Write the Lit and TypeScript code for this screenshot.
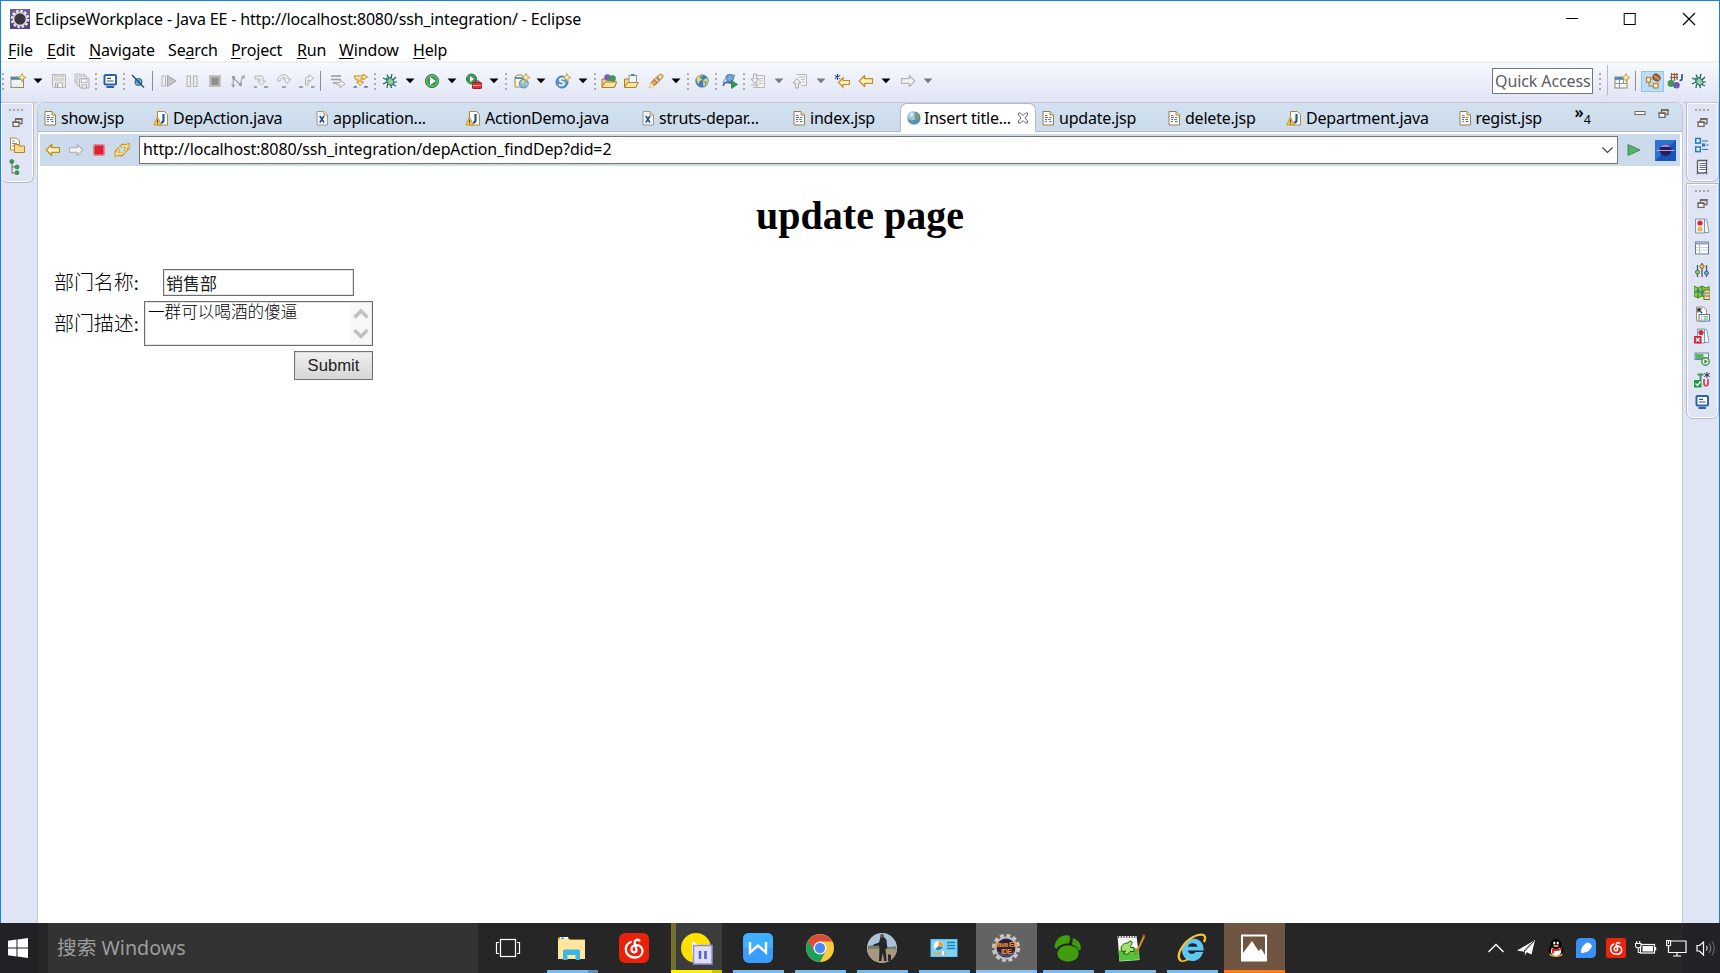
import { LitElement, html, svg, css, nothing, type TemplateResult } from "lit";
import { customElement } from "lit/decorators.js";

type Cell = [x: number, icon: string];

/* ---------- glyph library, 16x16 unless a viewBox is given ---------- */
const caret = (c: string) => svg`<path d="M3.500 5.500h9l-4.500 4.700z" fill="${c}"/>`;
const jspPage = svg`<path d="M3 1.500h7l3.500 3.500v10H3z" fill="#fbfdff" stroke="#94814e"/><path d="M10 1.500V5h3.500" fill="#e9d9a8" stroke="#a58544"/><path d="M5 5.500h2.500M9 7.500h2.500M5 11.500h2" stroke="#d85a6a"/><path d="M5 7.500h3M5 9.500h2M9 11.500h2.500" stroke="#4a6ab0"/><path d="M8 9.500h3" stroke="#3f9f6a"/>`;
const bug = svg`<g stroke="#1f5f5a" stroke-width="1.200" fill="none"><path d="M1 5l3 1.500M5 1.500l1.500 3M10 1l-1 4M14 4l-3 3M15 9h-4M14 13l-4-2M9.500 15l-1-3M5 15l.500-4M1 11l4-2"/></g><ellipse cx="8" cy="8.500" rx="3" ry="4" transform="rotate(-40 8 8)" fill="#8fcf9a" stroke="#1f6b62"/><circle cx="5.300" cy="6" r="1.800" fill="#3b8a83"/>`;
const globe = svg`<circle cx="8" cy="8" r="6.300" fill="#3f7fc0" stroke="#5a7fa5" stroke-width=".6"/><path d="M3 4.500C5 2 7 1.800 8.500 2.200L7 5 8 7 5.500 8 5 11C3 9.500 2 7 3 4.500zM9.500 7l3-2 1.500 2.500c0 3-2 5-4.500 6L9 10z" fill="#e8d67a"/><path d="M6 2.500l3 .5-1 2-2.500.500zM10.500 8l2.500.5-2 3.500z" fill="#58a05a"/>`;
const globeSoft = svg`<circle cx="8" cy="8" r="6.600" fill="#4a8ec2"/><circle cx="6" cy="6" r="4.500" fill="#9cc9e2"/><path d="M9 2.500l3 1.500 1.500 3.500-2 3.500L9.500 9 8.500 6zM4 9l2.500 1 .5 3.500-2.500-1.500z" fill="#8a9a5c"/><circle cx="5.500" cy="4.500" r="2" fill="#d5ebf5"/>`;
const back = (s: string, f: string) => svg`<path d="M1.200 8l5.500-5.500v3.200h7.800v4.600H6.700v3.200z" fill="${f}" stroke="${s}" stroke-width="1.200" stroke-linejoin="round"/>`;
const fwd = (s: string, f: string) => svg`<path d="M14.800 8L9.300 2.500v3.200H1.500v4.600h7.800v3.200z" fill="${f}" stroke="${s}" stroke-width="1.200" stroke-linejoin="round"/>`;
const console_ = svg`<rect x="2.500" y="2" width="11.500" height="9.500" rx="1" fill="#fff" stroke="#2d62a8" stroke-width="2"/><path d="M5 5.300h4M5 8h6.500" stroke="#2b5797" stroke-width="1.200"/><path d="M4.500 14h7.500" stroke="#2d62a8" stroke-width="2"/>`;
const restore = svg`<path d="M6.500 4h6.500v4.500h-2.500M6.500 4v2.500" fill="none" stroke="#70685c" stroke-width="1.300"/><rect x="4.100" y="7" width="5.900" height="4.400" fill="#fff" stroke="#70685c" stroke-width="1.300"/><path d="M6 3.900h7.500M3.500 7.200h7" stroke="#70685c" stroke-width="1.600"/>`;
const spark = svg`<path d="M12 .5l1.200 2.800 2.800 1.200-2.800 1.200L12 8.500l-1.200-2.800L8 4.500l2.800-1.200z" fill="#fdf3c0" stroke="#c89a2b" stroke-width=".9"/>`;
const xmlPage = svg`<path d="M3 1.500h7l3.500 3.500v10H3z" fill="#eef4fb" stroke="#a09a80"/><path d="M10 1.500V5h3.500" fill="#e9d9a8" stroke="#b89a54"/><path d="M5.800 6l4.200 6.500M10 6l-4.200 6.500" stroke="#24477f" stroke-width="1.500"/>`;
const javaPage = svg`<path d="M4.500 1.500h7l3 3v10.500h-10z" fill="#fff" stroke="#b08b3c"/><path d="M10.500 4v6.500c0 1.500-1 2-2.500 2" fill="none" stroke="#1f5a97" stroke-width="2.200"/><path d="M4.500 7L.8 15h7.400z" fill="#f7d067" stroke="#c78a1b" stroke-width=".9"/><path d="M4.500 9.500v3M4.500 13.300v1" stroke="#6a4206" stroke-width="1.200"/>`;

const glyphs: Record<string, TemplateResult<2>> = {
  caret: caret("#000"),
  caretOff: caret("#77787c"),
  newWiz: svg`<rect x="1" y="4" width="12.500" height="10.500" fill="#eef5fb" stroke="#a58a50"/><path d="M1 5.500h10" stroke="#3f80bb" stroke-width="2.500"/><path d="M3 14C9 13 12 11 12.500 8" stroke="#cfe0ee" fill="none"/>${spark}`,
  save: svg`<path d="M1.500 1.500h13v13h-12l-1-1z" fill="#e9eaee" stroke="#b3b4b8"/><rect x="4" y="2" width="8" height="5" fill="#f8f8fa" stroke="#bcbdc0"/><path d="M5 3.500h6M5 5.500h6" stroke="#c8c9cc"/><rect x="4.500" y="10" width="7" height="4.500" fill="#f8f8fa" stroke="#b3b4b8"/><path d="M6.500 11v3" stroke="#a5a6aa" stroke-width="1.500"/>`,
  saveAll: svg`<path d="M1 1h9.500v9H1z" fill="#ebecf0" stroke="#bbbcc0"/><path d="M3 3h9.500v9.500H3z" fill="#ebecf0" stroke="#b7b8bc"/><path d="M5.500 5.500h9.500v9.500H6.500l-1-1z" fill="#e9eaee" stroke="#b0b1b5"/><rect x="7.500" y="6" width="5.500" height="3.500" fill="#fafafc" stroke="#bcbdc0"/><rect x="8" y="12" width="4.500" height="3" fill="#fafafc" stroke="#b0b1b5"/>`,
  console: console_,
  skip: svg`<circle cx="8.500" cy="9" r="3.600" fill="#6aa6cf" stroke="#2a6496"/><path d="M2 2l12 12.500" stroke="#1e3f66" stroke-width="1.200"/>`,
  resume: svg`<rect x="1" y="3" width="3.500" height="10" fill="#eef0f0" stroke="#b5b7b7"/><path d="M6.500 2.500L15 8l-8.500 5.500z" fill="#c2c5c5" stroke="#a2a5a5"/>`,
  suspend: svg`<rect x="3" y="3" width="3.500" height="10.500" fill="#eceded" stroke="#b2b4b4"/><rect x="9.500" y="3" width="3.500" height="10.500" fill="#eceded" stroke="#b2b4b4"/>`,
  stopOff: svg`<rect x="2.500" y="2.500" width="11" height="11" fill="#b8b9bb" stroke="#c2c3c6"/><rect x="4.500" y="4.500" width="7" height="7.500" fill="#8d8e90"/>`,
  disconnect: svg`<path d="M3.200 13V5l7 6.500 2.500-8" fill="none" stroke="#9b9da0" stroke-width="1.100"/><path d="M10.500 4.500l4-3 .5 4zM1 11l4.500 1-2.500 3z" fill="#a5a7aa"/><circle cx="3.500" cy="4.500" r="1.700" fill="#9a9c9f"/><circle cx="10.500" cy="11.500" r="1.700" fill="#9a9c9f"/>`,
  stepIn: svg`<path d="M2 3h6.500c1 0 1.500.5 1.500 1.500V8h2.500L8.500 12 4.500 8H7V6H2z" fill="#eef0f2" stroke="#b2b4b7"/><path d="M1 14h3M11 14h4" stroke="#a2a4a8" stroke-width="1.800"/>`,
  stepOver: svg`<path d="M1.500 8C2 0 12 0 12.500 6H15l-3.800 4.500L7.500 6H10C9 3.500 5 4 4 8z" fill="#eef0f2" stroke="#b2b4b7"/><path d="M6 14h4" stroke="#a2a4a8" stroke-width="1.800"/>`,
  stepRet: svg`<path d="M6.500 12V5.500c0-1 .5-1.500 1.500-1.500h2V1.500l4.500 3.800L10 9V7H9v5z" fill="#eef0f2" stroke="#b2b4b7"/><path d="M0 14h4M12 14h3.500" stroke="#a2a4a8" stroke-width="1.800"/>`,
  dropFrame: svg`<path d="M1 3h10M1 6.500h10M3 10h6" stroke="#97999c" stroke-width="1.700"/><path d="M10 6.500v3H7v2.500h3V15l5-4.200z" fill="#eceef0" stroke="#abadb0"/>`,
  filters: svg`<path d="M1 3h9V1l4.500 3L10 7V5H8v4h2.500L7 12.500 3.500 9H6V7H3z" fill="#fbe6a4" stroke="#c08d24"/><path d="M0 14.500c2-2 3-2 4.500 0zM10.500 14.500c2-2 3-2 5 0z" fill="#28559a"/>`,
  bug,
  run: svg`<circle cx="8" cy="8" r="6.600" fill="#3f9a52" stroke="#2c7f3f"/><circle cx="8" cy="8" r="5.500" fill="none" stroke="#8fcf8f" stroke-width=".8"/><path d="M6 3.800L11.500 8 6 12.200z" fill="#fff"/>`,
  extTools: svg`<circle cx="5.500" cy="6" r="5" fill="#3f9a52" stroke="#2c7f3f"/><path d="M4 3l4 3-4 3z" fill="#fff"/><path d="M9 9.500V8h4v1.500" fill="none" stroke="#8c1c1c"/><rect x="6.500" y="9.500" width="9" height="6" rx=".8" fill="#d5323a" stroke="#a01820"/><path d="M6.500 12.500h9" stroke="#f3a0a0"/>`,
  newWeb: svg`<path d="M1 4l2-2h5l1 2v10H1z" fill="#fdf6dc" stroke="#a58a50"/><path d="M1 5h8" stroke="#4f86bb" stroke-width="1.800"/><circle cx="9.800" cy="10.500" r="4.500" fill="#8ab8da" stroke="#4a7da8" stroke-width=".8"/><path d="M7.500 8l2.500-1 .5 2.500-2 2zM11.500 10l2 0-1 3.500z" fill="#dcd88e"/>${spark}`,
  newServlet: svg`<circle cx="7" cy="9" r="6" fill="#5b97cf" stroke="#3f77b0"/><path d="M9.500 6.300C8 4.800 4.500 5.300 4.800 7.300s4.500 1.300 4.500 3.200S5.500 13.200 4 11.500" fill="none" stroke="#fff" stroke-width="1.700"/>${spark}`,
  openType: svg`<path d="M1 6h5l1 1.500h7V14H1z" fill="#f8d680" stroke="#a97f2c"/><circle cx="6.500" cy="4.500" r="3.300" fill="#7461b5"/><circle cx="11.500" cy="5.500" r="3.300" fill="#3f9a52"/><path d="M1 14.500L4 9h12l-3 5.500z" fill="#fbe4a3" stroke="#b08328"/>`,
  openTask: svg`<path d="M1.500 6h5l1 1.500h6V14h-12z" fill="#f8d680" stroke="#a97f2c"/><rect x="6" y="2.500" width="7.500" height="9" fill="#f2f5fa" stroke="#8e98a8"/><path d="M8 2h3.500" stroke="#6d7683" stroke-width="2"/><path d="M1.500 14.500l3-5h11l-3 5z" fill="#fbe4a3" stroke="#b08328"/>`,
  search: svg`<path d="M11.500 1.500c2-1 4 .5 3.500 2.500L9.500 10 6 6.500z" fill="#f6d384" stroke="#b0803a"/><path d="M8.800 4.500l3 3" stroke="#8d86a5" stroke-width="1.800"/><path d="M6 6.500L9.500 10l-3.500 2.500-2.800-2.800z" fill="#e7a05a" stroke="#a8682c"/><path d="M3 9.500l3.200 3.200L.8 15.200z" fill="#fbe9b2" stroke="#d8b060" stroke-width=".6"/>`,
  globe,
  launchWs: svg`<path d="M5 2h8l-4 8H1z" fill="#d9e6f2" stroke="#7b97b5"/><circle cx="8" cy="5" r="3.600" fill="#7aa7d0" stroke="#4f7eae"/><path d="M1 13c2-5 5-5 9-2" fill="none" stroke="#3c6da0" stroke-width="1.500"/><path d="M9.500 7.500l6 4-6 4z" fill="#2e9a4a" stroke="#1f7a36" stroke-width=".7"/>`,
  nextAnn: svg`<path d="M6.500 2.500h8v12h-8z" fill="#f2f3f5" stroke="#b6b8bb"/><path d="M9 5.500h4M9 8h4M9 10.500h4" stroke="#c0c1c4"/><path d="M3.500 1h3v5h2.500L5 10.500 1 6h2.500z" fill="#eceef0" stroke="#a9abae"/><path d="M1 12h8M3 14.500h4" stroke="#b6b8bb"/>`,
  prevAnn: svg`<path d="M4.500 1.500h10v11h-5" fill="#f2f3f5" stroke="#b6b8bb"/><path d="M7 4h6M9 6.500h4M10 9h3" stroke="#c0c1c4"/><path d="M3.500 15h3v-5h2.500L5 5.500 1 10h2.500z" fill="#eceef0" stroke="#a9abae"/>`,
  lastEdit: svg`<path d="M4.500 9.500l4.500-4.500v2.500h6.500v4H9v2.500z" fill="#fdeebc" stroke="#c08d24" stroke-width="1.200"/><path d="M3.500 1v6M.8 2.400l5.400 3.200M6.200 2.400L.8 5.600" stroke="#24477f" stroke-width="1.100"/>`,
  back: back("#c08d24", "#fdf0c0"),
  fwdOff: fwd("#b4b6ba", "#f3f4f6"),
  openPersp: svg`<rect x="1" y="4" width="12" height="11" fill="#f5f9fd" stroke="#8f8a60"/><path d="M1 5.500h9" stroke="#3f80bb" stroke-width="2.500"/><path d="M5.500 7v8M1 10.500h12M9.500 7v4" stroke="#8f9a80"/>${spark}`,
  javaEE: svg`<path d="M4 8v5h6M4 6h5" fill="none" stroke="#9a8a50" stroke-width="1.200"/><rect x="1.500" y="4.500" width="4" height="4.500" fill="#fff6c8" stroke="#b8872c" stroke-width="1.300"/><rect x="8.500" y="10.500" width="4.500" height="4.500" fill="#fff6c8" stroke="#b8872c" stroke-width="1.300"/><ellipse cx="11.500" cy="4.500" rx="4" ry="3.300" transform="rotate(40 11.500 4.500)" fill="#a8643a" stroke="#6c3a1c" stroke-width=".8"/><path d="M8.800 2.600l5.500 4" stroke="#f0c898" stroke-width=".9"/>`,
  java: svg`<path d="M4 1.500h7M3 4.500h8M4.500 0v8M7.500 0v8M10 0v7" stroke="#8c5a3a" stroke-width="1.200"/><path d="M15 1v4.500c0 1.500-1 2-2.500 2" fill="none" stroke="#24579a" stroke-width="1.700"/><circle cx="4" cy="10.500" r="3.400" fill="#3f9a52"/><circle cx="9.500" cy="12.300" r="3.300" fill="#6d5bb0"/>`,
  stop: svg`<rect x="2.500" y="2.500" width="11" height="11" rx="1" fill="#f2a3a3" stroke="#e08a8c"/><rect x="4" y="4" width="8" height="8" fill="#e01f33" stroke="#cf1c30"/>`,
  refresh: svg`<g fill="none" stroke="#c08d24" stroke-width="3.400"><path d="M6.500 5.500C8 2.500 11 2.500 12.300 5c.6 1.500.2 3-1.300 4.500"/><path d="M9.500 10.500C8 13.500 5 13.500 3.700 11c-.6-1.500-.2-3 1.300-4.500"/></g><g fill="#fbe08a" stroke="#c08d24" stroke-width=".9" stroke-linejoin="round"><path d="M10.500 3.500L15 1v6.500z"/><path d="M5.500 12.500L1 15V8.500z"/></g><g fill="none" stroke="#fbe08a" stroke-width="1.800"><path d="M6.900 5.500C8.200 3.200 11 2.800 12.300 5c.6 1.500.2 2.800-1 4.200"/><path d="M9.100 10.500C7.800 12.800 5 13.200 3.700 11c-.6-1.500-.2-2.800 1-4.200"/></g>`,
  go: svg`<path d="M2 2.500l12 5.500-12 5.500z" fill="#52b468" stroke="#3a8f50"/>`,
  jsp: jspPage, xml: xmlPage, javaFile: javaPage, globeSoft,
  restore,
  min: svg`<rect x="3" y="5.500" width="10" height="3" fill="#fff" stroke="#70685c"/>`,
  folders: svg`<path d="M1.500 1h6l3 3v9h-9z" fill="#fffdf2" stroke="#b08b3c"/><path d="M3 4h3M3 6.500h5M3 9h3" stroke="#7d8fae"/><path d="M5.500 7.500h4l1 1.500h5v6.500h-10z" fill="#fbdc8c" stroke="#b08328"/>`,
  tree: svg`<path d="M3 4v10.500M3 8h5M3 14h5" stroke="#6b7076" fill="none"/><g fill="#3f9a52" stroke="#2b7a44" stroke-width=".7"><circle cx="2.800" cy="2.500" r="2"/><circle cx="8" cy="8" r="2"/><circle cx="8" cy="13.700" r="2"/></g>`,
  outline: svg`<g fill="#e6f3ff" stroke="#2b79b8" stroke-width="1.500"><rect x="1.700" y="1.500" width="4.600" height="4.600"/><rect x="1.700" y="10" width="4.600" height="4.600"/><rect x="8.500" y="7" width="2" height="2" stroke-width="1.200"/></g><path d="M8 4h6M8 12.500h6M12 8h2.500" stroke="#2b79b8" stroke-width="1.200"/>`,
  taskList: svg`<path d="M3.500 1.500h10M3.500 1.500v13l1.300-1 1.500 1 1.700-1 1.500 1 1.500-1 1.500 1v-13" fill="#fafbff" stroke="#59596b" stroke-width="1.300"/><path d="M5.500 4.500h6.500M5.500 6.500h6.500M5.500 8.500h6.500M5.500 10.500h6.500" stroke="#6c6c80"/>`,
  marker: svg`<path d="M1.500 1h9v14h-9z" fill="#e9f1f9" stroke="#7d98b5"/><path d="M11 1c3 0 2 5 3 8 .7 3 1 4 .5 5.500H11" fill="#f5f9fd" stroke="#7d98b5"/><circle cx="6" cy="5" r="2.600" fill="#e0262f"/><path d="M3.500 13c0-4 1-4 2.500-4.500 1.500.5 2.500.5 2.500 4.500z" fill="#f6b04a"/>`,
  props: svg`<rect x="1.500" y="2" width="13" height="12" fill="#fff" stroke="#6d7c92"/><path d="M1.500 3.500h13" stroke="#8fa3bf" stroke-width="2"/><path d="M5.500 4v10" stroke="#a7b2c2"/><path d="M2 7.500h12M2 10h12" stroke="#c9d2de"/>`,
  servers: svg`<path d="M3.500 3v12M8 1v14M12.500 3v12" stroke="#48566e" stroke-width="1.300"/><circle cx="3.500" cy="10" r="2" fill="#a5d05a" stroke="#48703a"/><circle cx="8" cy="4.500" r="2" fill="#f7c95a" stroke="#8a6420"/><circle cx="12.500" cy="11" r="2" fill="#7cb2e0" stroke="#2f5f98"/>`,
  datasrc: svg`<path d="M0 2l4 2 4-2 4 2 3-1.500V12l-3 2-4-2-4 2-4-2z" fill="#8fd82c" stroke="#3f8a1e"/><path d="M4 4v10M8 2v10" stroke="#2f6b28"/><path d="M1 9l3-3 3 3 4-3" stroke="#2a7cc0" fill="none" stroke-width="1.500"/><rect x="10" y="6" width="6" height="9.500" fill="#efe2b0" stroke="#7a6430"/><path d="M11 9h4M11 12h4" stroke="#7a6430"/>`,
  snippets: svg`<path d="M2.500 1h7l3 3v11h-10z" fill="#fbfcff" stroke="#a58f5a"/><path d="M4 3l4 4M4 6.500V3h3.500" stroke="#1f2f48" fill="none" stroke-width="1.300"/><rect x="5" y="8.500" width="10.500" height="6.500" fill="#fff" stroke="#5c77a0"/><path d="M7 10.800h1M7 13h1" stroke="#c63a48"/><path d="M9.500 10.800h4.500M9.500 13h4.500" stroke="#3f9f5a"/>`,
  markerErr: svg`<path d="M3.500 1h7v14h-7z" fill="#e9f1f9" stroke="#7d98b5"/><path d="M11 1c3 0 2 5 3 8 .7 3 1 4 .5 5.500H11" fill="#f5f9fd" stroke="#7d98b5"/><circle cx="7" cy="4.500" r="2.600" fill="#e0262f"/><rect x="0" y="8" width="7.500" height="7.500" fill="#d8233b"/><path d="M2 10l3.500 3.500M5.500 10L2 13.500" stroke="#fff" stroke-width="1.400"/>`,
  progress: svg`<rect x="1" y="3" width="13.500" height="6.500" fill="#e8f3ea" stroke="#6b8a9e"/><rect x="1.500" y="4" width="8" height="5" fill="#5cb06c"/><circle cx="11.500" cy="11.500" r="3.700" fill="#fff" stroke="#3a8f4a" stroke-width="1.400"/><path d="M10.300 9.300l3.700 2.200-3.700 2.200z" fill="#3a8f4a"/>`,
  junit: svg`<path d="M3.500 2.500h6M6.500 2.500v6" stroke="#3a8f50" stroke-width="1.800"/><path d="M10 7v4.500c0 3 4 3 4 0V7" fill="none" stroke="#d24452" stroke-width="1.700"/><rect x="0" y="8" width="7.500" height="7.500" fill="#1f9a48"/><path d="M1.500 11.500l2 2 3-4" stroke="#fff" fill="none" stroke-width="1.300"/><path d="M13 0v6M10.300 1.500l5.400 3M15.700 1.500l-5.400 3" stroke="#24314f"/>`,
};

const icon = (name: string) =>
  html`<svg class="i" viewBox="0 0 16 16" aria-hidden="true">${glyphs[name]}</svg>`;

const cloud = svg`<g fill="none" stroke="#fff" stroke-width="2.300" stroke-linecap="round"><path d="M20.500 7.500c-3-1.800-5.300.2-4.800 2.600l1.700 6.300c.6 2.800-3.500 4.100-4.800 1.100-1-3 1.300-5.300 4.600-5.300 4 0 6.500 2.600 6.300 6-.2 4-3.800 6.300-8 6.300-5 0-8.700-3.500-8.700-8 0-3.500 2-6.300 5-7.500"/></g>`;

const taskIcons: Record<string, TemplateResult<2>> = {
  explorer: svg`<path d="M1 4.500h10l2 2h15v19H1z" fill="#f2c14a"/><rect x="1" y="7" width="27" height="19" fill="#ffe69a"/><rect x="3" y="4" width="8" height="2.500" fill="#fff"/><rect x="4" y="4.500" width="3" height="1.500" fill="#3aa0dc"/><path d="M6 27V18q0-1.500 1.500-1.500h14Q23 16.500 23 18v9h-4.500v-5h-8v5z" fill="#3fb4e8"/>`,
  cloud: svg`<rect width="30" height="30" rx="6" fill="#eb2008"/>${cloud}`,
  player: svg`<circle cx="15" cy="15" r="15" fill="#ffe100"/><path d="M11 8l11 7-11 8z" fill="#fff"/><rect x="12.500" y="12.500" width="18.500" height="18.500" fill="#dfe0fa" stroke="#8e8edb" stroke-width="1.500"/><path d="M19 18v8M24.500 18v8" stroke="#5560c8" stroke-width="2.600"/>`,
  wps: svg`<rect width="30" height="30" rx="6" fill="#3b9dfb"/><path d="M0 6q0-6 6-6h18q6 0 6 6v9H0z" fill="#3fb0fd"/><path d="M7 9v10.500l8-7 8 7V9" fill="none" stroke="#fff" stroke-width="2.400"/>`,
  chrome: svg`<circle cx="15" cy="15" r="14" fill="#f9cb3c"/><path d="M2.900 8A14 14 0 0 0 15 29l5.600-11L15 15z" fill="#1f9f5c"/><path d="M15 8.500h12.400L27 8A14 14 0 0 0 3 8l6.300 10z" fill="#dc4a3d"/><circle cx="15" cy="15" r="6.500" fill="#fff"/><circle cx="15" cy="15" r="5.200" fill="#4a8af4"/>`,
  photo: svg`<circle cx="15" cy="15" r="15" fill="#a9c3dd"/><path d="M0 15h30a15 15 0 0 1-30 0z" fill="#a89880"/><path d="M1 13q7-2 14 0t14 0v3H1z" fill="#75806c"/><path d="M13.500 4h3.500l2.500 3 .8 8-1.800 1 .5 5 .5 7h-2.200l-1.500-8-1.500 8H12l.5-13-1-2.500L6.500 13v-1.500l5.500-2z" fill="#26262a"/><circle cx="15" cy="3" r="1.900" fill="#6b4a3a"/><path d="M21 21l3 1v6h-3z" fill="#2f2a26"/>`,
  panel: svg`<rect x="1.500" y="6" width="27" height="18" fill="#62c3ee"/><rect x="2.500" y="7" width="25" height="16" fill="#7fd2f5"/><circle cx="9.500" cy="13" r="4.800" fill="#fff"/><path d="M9.500 13V8.200A4.800 4.800 0 0 1 14 14z" fill="#f0a02c"/><path d="M9.500 13l4.500 1a4.800 4.800 0 0 1-8 2z" fill="#2d8cc8"/><path d="M18 9.500h8M18 12.500h8M18 15.500h8" stroke="#1f7fb8" stroke-width="1.700"/><path d="M5 20.500h12" stroke="#f0a02c" stroke-width="1.700"/><path d="M14 18v4" stroke="#fff" stroke-width="2"/>`,
  gear: svg`<circle cx="15" cy="15" r="12.300" fill="none" stroke="#c9c9c9" stroke-width="3.600" stroke-dasharray="3.900 2.540"/><circle cx="15" cy="15" r="10.500" fill="#2a2438" stroke="#bdbdbd" stroke-width="2.200"/><path d="M7 18q8 7 16 0v3q-8 6-16 0z" fill="#4d4a78"/><text x="15" y="14" text-anchor="middle" class="gt" textLength="25">Java EE</text><text x="15.500" y="20.500" text-anchor="middle" class="gt" textLength="11">IDE</text>`,
  green: svg`<g fill="#3f9e0c"><ellipse cx="15" cy="20.500" rx="10.700" ry="8.300"/><path d="M1.500 14C2 7 8 1 15.500 2.500 18 3.500 17 8 15.500 10.500 10 10.500 6 12 3.500 16z"/><path d="M20 5c6 2 9 8 7.500 11.500-.7 1.700-3 1.500-3.700.4-1-2-3.500-4-4.800-5.400z"/></g><path d="M4 17.500C6 10 24 9.500 26 18" fill="none" stroke="#262626" stroke-width=".9"/>`,
  notepad: svg`<path d="M2.500 3h19l3 24-20 1.500z" fill="#f4f6f0"/><path d="M3 4h18" stroke="#555" stroke-width="2" stroke-dasharray="1.200 1.500"/><path d="M3.500 18q10-6 20.500-2l.7 10.500L4.500 28z" fill="#55c23a"/><path d="M6 15c1-4 4-5 7-5 1-3 5-2 4 .5-.5 2-2 2-1.500 4h3.500v4h-4l-2 3-5-1 3-2.500-4 .5z" fill="#a4e06a" stroke="#1f5a1a"/><path d="M28.500 2.500L21 19l-1 3 2-2L30 3.500z" fill="#f2b23a" stroke="#9a6418" stroke-width=".8"/><circle cx="28.800" cy="2.500" r="1.300" fill="#c2362c"/>`,
  ie: svg`<path d="M16 5.500c7 0 11 5 10.700 12H11c.3 3.500 5 5 7.500 1.500h7.700C24 25.500 20 28 15.500 28 9.500 28 5 23.500 5 17S9.500 5.500 16 5.500zM11 13.700h9.500c-.3-4.500-9-4.700-9.500 0z" fill="#59c8f4" fill-rule="evenodd"/><path d="M4 28C-3 22 9 5 21 2c8-2 8 3 6 7" fill="none" stroke="#f6c430" stroke-width="2.300"/><path d="M4 28c2 .8 5-.5 8-2" fill="none" stroke="#f6c430" stroke-width="1.600"/>`,
  photos: svg`<path d="M2 1.500h26v27H2z" fill="#fff"/><path d="M4 3.500h22V22l-4-6.500-2.500 2.500L13 8l-9 12z" fill="#6f5542"/>`,
};

const trayIcons: Record<string, TemplateResult<2>> = {
  up: svg`<path d="M2.500 14L10 6.500 17.500 14" fill="none" stroke="#fff" stroke-width="1.400"/>`,
  plane: svg`<path d="M1 12.500L19 2l-3.500 14.500-5.500-2.500z" fill="#fff"/><path d="M9 13L18 3 8.500 12v6.500l2.500-4" fill="#fff" stroke="#262626" stroke-width=".8"/>`,
  qq: svg`<ellipse cx="10" cy="16.500" rx="6.500" ry="2.500" fill="#f0a020"/><ellipse cx="10" cy="12" rx="7.500" ry="5.500" fill="#000"/><ellipse cx="10" cy="13" rx="5.200" ry="5" fill="#fff"/><circle cx="10" cy="6" r="5.200" fill="#000"/><ellipse cx="8.300" cy="5" rx="1.100" ry="1.500" fill="#fff"/><ellipse cx="11.700" cy="5" rx="1.100" ry="1.500" fill="#fff"/><ellipse cx="10" cy="8" rx="3" ry="1" fill="#f5a81c"/><path d="M4 9.500q6 3 12 0v2q-4 2-8 1.500v2.500H6V12z" fill="#e22020"/>`,
  blue: svg`<path d="M5 0h10q5 0 5 5v10q0 5-5 5H0V5Q0 0 5 0z" fill="#3b8ff8"/><path d="M5 15c0-5 1-7 6-10.500 2 0 4 1.500 5 3.500-2 5-6 7-11 7z" fill="#fff"/>`,
  cloud: svg`<rect width="20" height="20" rx="2" fill="#e8240e"/><g transform="scale(.667)">${cloud}</g>`,
  battery: svg`<rect x="4.500" y="6.500" width="14" height="8.500" fill="none" stroke="#fff" stroke-width="1.200"/><rect x="6.500" y="8" width="10.500" height="5.500" fill="#fff"/><path d="M19.500 9v3.500" stroke="#fff" stroke-width="1.500"/><path d="M-.5 5.500h5.500v2.500q-.5 2-2.700 2T-.5 8zM.8 3v2.500M3.700 3v2.500M2.300 10v4.500h2" fill="#262626" stroke="#fff" stroke-width="1.100"/>`,
  network: svg`<path d="M5 3h15v11.500H2.500V8" fill="none" stroke="#fff" stroke-width="1.200"/><path d="M11 14.500v3.500M7 18h8" stroke="#fff" stroke-width="1.200"/><rect x=".6" y="2.600" width="4" height="5" fill="#262626" stroke="#fff" stroke-width="1.100"/><path d="M2.500 3v3" stroke="#fff"/>`,
  volume: svg`<path d="M1 7.500h2.500L7.500 4v13l-4-4H1z" fill="none" stroke="#fff" stroke-width="1.200"/><path d="M10.500 8q1.500 2.200 0 4.500" fill="none" stroke="#ddd" stroke-width="1.200"/><path d="M13 5.500q3.500 4.700 0 9.500" fill="none" stroke="#777" stroke-width="1.200"/><path d="M15.800 3q5 7 0 14.500" fill="none" stroke="#666" stroke-width="1.200"/>`,
};

/* Toolbar tools with the offset at which each one starts; a cell spans to the next. */
const tools: Cell[] = [
  [1, "grip"], [10, "newWiz"], [30, "caret"], [51, "save"], [74, "saveAll"], [94, "grip"], [101.500, "console"], [122, "grip"],
  [130, "skip"], [152, "sep"], [161, "resume"], [184, "suspend"], [207, "stopOff"], [230, "disconnect"], [253, "stepIn"],
  [276, "stepOver"], [299, "stepRet"], [320, "sep"], [330, "dropFrame"], [353, "filters"], [373, "grip"], [382, "bug"],
  [402, "caret"], [424, "run"], [444, "caret"], [466, "extTools"], [486, "caret"], [504, "grip"], [514, "newWeb"],
  [533, "caret"], [555, "newServlet"], [575, "caret"], [593, "grip"], [601, "openType"], [623, "openTask"], [648, "search"],
  [668, "caret"], [686, "grip"], [694, "globe"], [714, "grip"], [722, "launchWs"], [742, "grip"], [750, "nextAnn"],
  [771, "caretOff"], [792, "prevAnn"], [813, "caretOff"], [834, "lastEdit"], [858, "back"], [878, "caret"], [900, "fwdOff"],
  [920, "caretOff"], [940, "end"],
];

interface Tab { w: number; icon: string; label: string }
const tabsLeft: Tab[] = [
  { w: 110.5, icon: "jsp", label: "show.jsp" },
  { w: 161.5, icon: "javaFile", label: "DepAction.java" },
  { w: 150.5, icon: "xml", label: "application..." },
  { w: 175.5, icon: "javaFile", label: "ActionDemo.java" },
  { w: 151, icon: "xml", label: "struts-depar..." },
  { w: 109, icon: "jsp", label: "index.jsp" },
];
const tabsRight: Tab[] = [
  { w: 126, icon: "jsp", label: "update.jsp" },
  { w: 119.5, icon: "jsp", label: "delete.jsp" },
  { w: 171, icon: "javaFile", label: "Department.java" },
  { w: 118, icon: "jsp", label: "regist.jsp" },
];

const menus: [string, string, string, number][] = [
  ["", "F", "ile", 39], ["", "E", "dit", 42], ["", "N", "avigate", 79], ["Se", "a", "rch", 63],
  ["", "P", "roject", 66], ["", "R", "un", 42], ["", "W", "indow", 74], ["", "H", "elp", 50],
];

const apps: [string, string][] = [
  ["explorer", "split"], ["cloud", "idle"], ["player", "alert"], ["wps", ""], ["chrome", ""], ["photo", ""],
  ["panel", ""], ["gear", "active"], ["green", ""], ["notepad", ""], ["ie", ""], ["photos", "hot"],
];

@customElement("app-root")
export class AppRoot extends LitElement {
  static styles = css`
    :host { display: block; width: 1720px; height: 973px; overflow: hidden;
      font: 16px/20px "Noto Sans", "Noto Sans CJK SC", sans-serif; color: #000; background: #fff; }
    * { box-sizing: border-box; }
    .i { width: 16px; height: 16px; display: block; flex: none; }
    .window { height: 923px; border: 1px solid #1883d7; border-bottom: 0; display: flex; flex-direction: column; }
    .title { height: 36px; flex: none; display: flex; align-items: center; padding-left: 9px; }
    .logo { width: 20px; height: 20px; margin: -1px 5px 0 0; }
    .caption { flex: 1; white-space: nowrap; letter-spacing: -.157px; }
    .wbtns { display: flex; width: 175px; height: 36px; }
    .wbtns svg { width: 58.300px; height: 36px; flex: none; }
    .menu { height: 24px; flex: none; display: flex; align-items: center; padding: 2px 0 0 7px; letter-spacing: -.15px; }
    .menu span { white-space: nowrap; flex: none; }
    u { text-underline-offset: 2px; text-decoration-thickness: 1px; }
    .tools { height: 41px; flex: none; border-top: 2px solid #f0f0f0; display: flex; align-items: center;
      background: linear-gradient(#f6f9fe, #e0e4f4); padding-bottom: 3px; }
    .cell { flex: none; }
    .grip { width: 2px; height: 17px; margin-left: 1px; background: repeating-linear-gradient(#b0aba3 0 2px, transparent 2px 5px); }
    .sep { width: 1px; height: 20px; background: #8d8e93; }
    .quick { width: 101px; height: 26px; margin-left: auto; border: 1px solid #767676; background: #fff; color: #5c5c5c;
      padding-left: 2px; line-height: 24px; white-space: nowrap; letter-spacing: -.1px; }
    .persp { display: flex; align-items: center; width: 126px; padding-left: 5px; }
    .edge { width: 4px; height: 32px; margin: 0 6px 0 3px; border-right: 1.500px solid #b9bac6; border-radius: 0 0 4px 0; }
    .persp .sep { margin: 0 5px 0 5px; }
    .on { width: 23px; height: 21px; background: #bcdcf8; border: 1px solid #8cc6f5; display: grid; place-items: center; margin-right: 3px; }
    .persp .bugp { margin-left: 8px; }
    .body { flex: 1; display: flex; background: #e0e5f5; min-height: 0; }
    .side { width: 36px; flex: none; border-top: 1px solid #c2c4d0; }
    .right { width: 36px; padding-left: 3px; }
    .stack { width: 33px; border: 1px solid #b8bacb; border-top: 0; border-radius: 0 0 7px 7px;
      box-shadow: inset 0 0 0 1px #fff; display: flex; flex-direction: column; align-items: center; padding-right: 1px; }
    .left .stack { border-left: 0; }
    .stack .i { margin-bottom: 6px; }
    .dots { width: 15px; height: 2px; margin: 6px 0 4px; background: repeating-linear-gradient(90deg, #aaa59c 0 2.500px, transparent 2.500px 4px); flex: none; }
    .lstack { height: 80px; }
    .r1 { height: 79px; }
    .r2 { height: 236px; margin-top: 1px; border-top: 1px solid #b8bacb; }
    .r2 .i { margin-bottom: 6.050px; }
    .main { flex: 1; min-width: 0; background: #fff; border: 1px solid #c6c7d1; border-bottom: 0; border-radius: 8px 8px 0 0; overflow: hidden;
      display: flex; flex-direction: column; }
    .tabs { height: 29px; flex: none; display: flex; background: linear-gradient(#d2e1f0, #ccdbeb); border-bottom: 1px solid #b4b9cc; padding-left: 4px; }
    .tab { display: flex; align-items: center; flex: none; white-space: nowrap; height: 29px; letter-spacing: -.22px; }
    .tab .i { margin-right: 3px; }
    .tab .wide { margin-right: 4.500px; }
    .tabs .active { background: #fff; width: 136px; margin-right: 4px; padding-left: 5px; border: 1px solid #b4b9cc; border-bottom: 0; border-radius: 7px 7px 0 0; }
    .active .i { margin-right: 2px; }
    .active .close { width: 12px; height: 12px; margin-left: auto; margin-right: 6px; }
    .more { width: 57px; height: 28px; display: flex; }
    .more b { font-size: 16px; font-weight: 600; line-height: 22px; height: 28px; margin-top: -2px; }
    .more span { padding-top: 7px; font-size: 12.500px; line-height: 20px; }
    .tabs > .i { margin: 3px 7px 0 0; }
    .nav { height: 32px; flex: none; margin: 2px 2px 0; background: #ccdbec; display: flex; align-items: center; padding-left: 5px; }
    .nav > .i { margin-right: 7px; }
    .url { height: 28px; width: 1479px; margin-left: 2px; border: 1px solid #767676; background: #fff; display: flex; align-items: center;
      padding: 0 3px; white-space: nowrap; flex: none; letter-spacing: -.12px; line-height: 24px; }
    .url span { margin-top: -3px; }
    .url svg { width: 13px; height: 10px; margin-left: auto; }
    .nav .goi { margin: 0 13px 0 8px; }
    .ball { width: 21px; height: 21px; }
    .page { flex: 1; padding: 0 17px; font-family: "Liberation Serif", "Noto Sans CJK SC", serif; }
    h1 { margin: 27px 0 0; font-size: 40px; line-height: 46px; text-align: center; }
    .form { margin-top: 30px; width: 318px; display: flex; flex-direction: column; font-size: 20px; }
    .row { display: flex; align-items: center; white-space: nowrap; }
    .lab { width: 90px; margin-left: -1px; font-weight: 300; letter-spacing: -.1px; color: #000; }
    .fld { border: 1px solid #6e6e6e; box-shadow: inset 0 0 0 1px #e3e3e3; background: #fff; font: 300 16.670px/23px "Noto Sans CJK SC", sans-serif; }
    .name { width: 191px; height: 27px; margin-left: 19px; padding: 1px 0 0 2px; font-weight: 400; font-size: 17px; color: #222; }
    .desc { width: 229px; height: 45px; display: flex; justify-content: space-between; padding: 1px 1px 1px 3px; line-height: 20px; }
    .desc span { margin-top: -2px; font-size: 16.600px; }
    .scroll { width: 21px; background: #f8f8f8; display: flex; }
    .scroll svg { width: 21px; height: 41px; }
    .r2row { margin-top: 5px; height: 45px; }
    .submit { align-self: flex-end; margin-top: 5px; width: 79px; height: 29px; border: 1px solid #707070; background: linear-gradient(#f0f0f0, #d6d6d6);
      font: 16.670px/27px "Liberation Sans", sans-serif; text-align: center; color: #222; box-shadow: inset 0 0 0 1px #dcdcdc; }
    .bar { height: 50px; background: #262626; display: flex; }
    .start { width: 48px; padding: 15px 0 0 8px; background: linear-gradient(90deg, #222226 38px, #262626 38px); }
    .start svg { width: 20px; height: 20px; display: block; }
    .find { width: 430px; background: #333; color: #9d9d9d; font-size: 19.700px; line-height: 50px; padding-left: 9px; white-space: nowrap; }
    .view { width: 69px; padding: 15px 0 0 17px; }
    .view svg { width: 26px; height: 20px; }
    .app { width: 51px; margin-right: 11px; height: 50px; border-bottom: 3px solid #76b9ed; display: grid; place-items: center; flex: none; padding-right: 1px; }
    .app svg { width: 30px; height: 30px; overflow: visible; margin-top: 3px; }
    .app.split { border-image: linear-gradient(90deg, #76b9ed 40px, #5a90bb 40px) 1; border-width: 0 0 3px; border-style: solid; }
    .app.idle { border-color: transparent; }
    .app.alert { background: linear-gradient(90deg, #76702b 5px, #3c3c3c 5px); border-image: linear-gradient(90deg, #fff000 40px, #cfc400 40px) 1; border-width: 0 0 3px; border-style: solid; }
    .app.active { width: 61px; margin: 0 6px 0 -5px; background: #636363; border-color: #86c0f0; }
    .app.hot { width: 61px; margin: 0 0 0 -5px; background: #6f5542; border-color: #ff7a10; }
    .gt { font: bold 7.500px "Liberation Sans", sans-serif; fill: #f58a2a; }
    .tray { margin-left: auto; display: flex; gap: 10px; padding: 15px 4px 0 0; width: 234px; flex: none;
      background: linear-gradient(90deg, #262626 197px, #222226 197px); }
    .tray svg { width: 20px; height: 20px; flex: none; overflow: visible; }
  `;

  private cell([x, name]: Cell, i: number) {
    if (name === "end") return nothing;
    const w = tools[i + 1][0] - x;
    const body = name === "grip" || name === "sep" ? html`<div class=${name}></div>` : icon(name);
    return html`<div class="cell" style="width:${w}px">${body}</div>`;
  }

  private tab(t: Tab) {
    const wide = t.icon === "javaFile" ? "i wide" : "i";
    return html`<div class="tab" style="width:${t.w}px"><svg class=${wide} viewBox="0 0 16 16">${glyphs[t.icon]}</svg><span>${t.label}</span></div>`;
  }

  render() {
    return html`
      <div class="window">
        <div class="title">
          <svg class="logo" viewBox="0 0 20 20"><rect width="20" height="20" fill="#54407a"/><rect width="20" height="8" fill="#6d5a92"/><circle cx="10" cy="10" r="8" fill="none" stroke="#eceaf0" stroke-width="2.600" stroke-dasharray="2.500 1.690"/><circle cx="10" cy="10" r="6.500" fill="#3a3742" stroke="#d8d6dc" stroke-width="1.700"/></svg>
          <div class="caption">EclipseWorkplace - Java EE - http://localhost:8080/ssh_integration/ - Eclipse</div>
          <div class="wbtns">
            <svg viewBox="0 0 58.300 36"><path d="M22 17.500h12" stroke="#000"/></svg>
            <svg viewBox="0 0 58.300 36"><rect x="22.200" y="12.500" width="11" height="11" fill="none" stroke="#000"/></svg>
            <svg viewBox="0 0 58.300 36"><path d="M22 12l12 12M34 12l-12 12" stroke="#000" stroke-width="1.200"/></svg>
          </div>
        </div>
        <div class="menu">${menus.map(([a, k, b, w]) => html`<span style="width:${w}px">${a}<u>${k}</u>${b}</span>`)}</div>
        <div class="tools">
          ${tools.map((t, i) => this.cell(t, i))}
          <div class="quick">Quick Access</div>
          <div class="persp"><div class="grip"></div><div class="edge"></div>${icon("openPersp")}<div class="sep"></div>
            <div class="on">${icon("javaEE")}</div>${icon("java")}<svg class="i bugp" viewBox="0 0 16 16">${bug}</svg></div>
        </div>
        <div class="body">
          <div class="side left"><div class="stack lstack"><div class="dots"></div>${["restore", "folders", "tree"].map(icon)}</div></div>
          <div class="main">
            <div class="tabs">
              ${tabsLeft.map((t) => this.tab(t))}
              <div class="tab active">${icon("globeSoft")}<span>Insert title...</span>
                <svg class="close" viewBox="0 0 12 12"><path d="M1.500 1h2L6 3.500 8.500 1h2v2L8 6l2.500 3v2h-2L6 8.500 3.500 11h-2V9L4 6 1.500 3z" fill="#fff" stroke="#6b6b6b"/></svg></div>
              ${tabsRight.map((t) => this.tab(t))}
              <div class="more"><b>»</b><span>4</span></div>${icon("min")}${icon("restore")}
            </div>
            <div class="nav">${icon("back")}${icon("fwdOff")}${icon("stop")}${icon("refresh")}
              <div class="url"><span>http://localhost:8080/ssh_integration/depAction_findDep?did=2</span>
                <svg viewBox="0 0 13 10"><path d="M1.500 2.500l5 5 5-5" fill="none" stroke="#444" stroke-width="1.200"/></svg></div>
              <svg class="i goi" viewBox="0 0 16 16">${glyphs.go}</svg>
              <svg class="ball" viewBox="0 0 21 21"><rect width="21" height="21" fill="#1656b8"/><path d="M0 0h21L0 21z" fill="#2a74d4"/><circle cx="10.500" cy="10" r="6" fill="#2c1c5c"/><path d="M5.500 7a6 6 0 0 1 10 0z" fill="#9a8ad0"/><path d="M1.500 10.500h18" stroke="#b7a6ee" stroke-width="1.200"/></svg>
            </div>
            <div class="page">
              <h1>update page</h1>
              <div class="form">
                <div class="row"><div class="lab">部门名称:</div><div class="fld name">销售部</div></div>
                <div class="row r2row"><div class="lab">部门描述:</div><div class="fld desc"><span>一群可以喝酒的傻逼</span>
                  <div class="scroll"><svg viewBox="0 0 21 41"><path d="M4.500 14.500l6.500-6.500 6.500 6.500M4.500 27l6.500 6.500 6.500-6.500" fill="none" stroke="#c1c1c1" stroke-width="3.600"/></svg></div></div></div>
                <div class="submit">Submit</div>
              </div>
            </div>
          </div>
          <div class="side right">
            <div class="stack r1"><div class="dots"></div>${["restore", "outline", "taskList"].map(icon)}</div>
            <div class="stack r2"><div class="dots"></div>${["restore", "marker", "props", "servers", "datasrc", "snippets", "markerErr", "progress", "junit", "console"].map(icon)}</div>
          </div>
        </div>
      </div>
      <div class="bar">
        <div class="start"><svg viewBox="0 0 20 20"><path d="M0 2.800L8.500 1.600v7.900H0zM9.500 1.400L20 0v9.500H9.500zM0 10.500h8.500v7.900L0 17.200zM9.500 10.500H20V20L9.500 18.600z" fill="#fff"/></svg></div>
        <div class="find">搜索 Windows</div>
        <div class="view"><svg viewBox="0 0 26 20"><rect x="5.500" y="1.500" width="15" height="17" fill="none" stroke="#fff" stroke-width="1.200"/><path d="M4 4.500H1.500v11H4M22 4.500h2.500v11H22" fill="none" stroke="#fff" stroke-width="1.200"/></svg></div>
        ${apps.map(([n, c]) => html`<div class="app ${c}"><svg viewBox="0 0 30 30">${taskIcons[n]}</svg></div>`)}
        <div class="tray">${Object.keys(trayIcons).map((n) => html`<svg viewBox="0 0 20 20">${trayIcons[n]}</svg>`)}</div>
      </div>`;
  }
}
